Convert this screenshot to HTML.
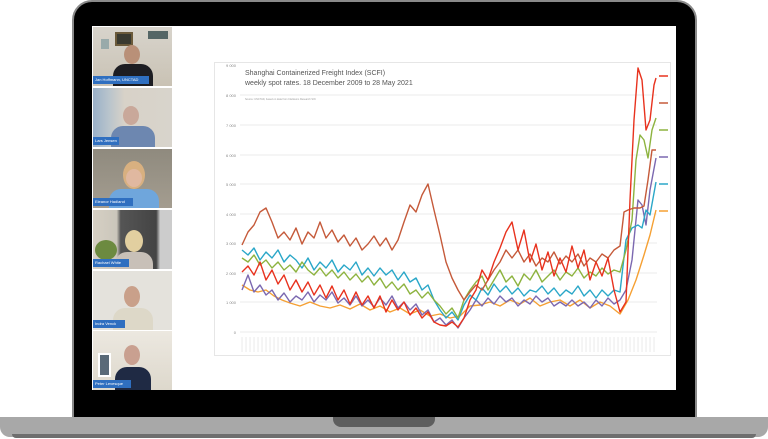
<!DOCTYPE html>
<html><head><style>
*{margin:0;padding:0;box-sizing:border-box}
body{width:768px;height:439px;background:#fff;position:relative;overflow:hidden;font-family:"Liberation Sans",sans-serif}
.frame{position:absolute;left:72px;top:0;width:625px;height:420px;background:#000;border:2px solid #8a8a8a;border-radius:20px 20px 0 0}
.screen{position:absolute;left:92px;top:26px;width:584px;height:364px;background:#fff}
.base{position:absolute;left:0;top:417px;width:768px;height:20px;background:#a8a8a8;border-radius:0 0 10px 10px}
.base2{position:absolute;left:12px;top:434px;width:744px;height:4px;background:#6e6e6e;border-radius:0 0 6px 6px}
.notch{position:absolute;left:333px;top:417px;width:102px;height:10px;background:#5e5e5e;border-radius:0 0 8px 8px}
.tile{position:absolute;left:93px;width:79px;height:59px;overflow:hidden}
.lab{position:absolute;left:0;bottom:2px;height:8px;background:#2f6fc0;color:#fff;font-size:4px;line-height:8px;padding:0 2px;white-space:nowrap;overflow:hidden}
.head{position:absolute;border-radius:50%}
.body{position:absolute;border-radius:12px 12px 0 0}
</style></head><body>
<div class="frame"></div>
<div class="screen"></div>
<div class="base"></div><div class="base2"></div><div class="notch"></div>

<div class="tile" style="top:27px;background:linear-gradient(#d8d4cc,#c9c2b4)">
<div style="position:absolute;left:22px;top:5px;width:18px;height:14px;background:#3a3a30;border:2px solid #6b5a3a"></div>
<div style="position:absolute;left:8px;top:12px;width:8px;height:10px;background:#9aa;"></div>
<div style="position:absolute;left:55px;top:4px;width:20px;height:8px;background:#566"></div>
<div class="head" style="left:31px;top:18px;width:16px;height:19px;background:#b99078"></div>
<div class="body" style="left:20px;top:37px;width:40px;height:22px;background:#1d1d22"></div>
<div class="lab" style="width:56px">Jan Hoffmann, UNCTAD</div></div>

<div class="tile" style="top:88px;background:linear-gradient(90deg,#9ab0c8 0,#b8c4cc 20%,#d8d2c8 40%,#d8d4cc)">
<div class="head" style="left:30px;top:18px;width:16px;height:19px;background:#c9a89a"></div>
<div class="body" style="left:18px;top:38px;width:44px;height:21px;background:#6d87b0"></div>
<div class="lab" style="width:26px">Lars Jensen</div></div>

<div class="tile" style="top:149px;background:linear-gradient(#8f8a7e,#a49d90)">
<div class="head" style="left:30px;top:12px;width:22px;height:28px;background:#d8b080"></div>
<div class="head" style="left:33px;top:20px;width:16px;height:18px;background:#e0b8a0"></div>
<div class="body" style="left:16px;top:40px;width:50px;height:19px;background:#6fa6dc"></div>
<div class="lab" style="width:40px">Eleanor Hadland</div></div>

<div class="tile" style="top:210px;background:linear-gradient(90deg,#d6d0c4 0,#cbc6bb 30%,#555 35%,#444 80%,#ccc 85%)">
<div style="position:absolute;left:2px;top:30px;width:22px;height:20px;background:#6c8a40;border-radius:50%"></div>
<div class="head" style="left:32px;top:20px;width:18px;height:22px;background:#e2cfa0"></div>
<div class="body" style="left:22px;top:42px;width:38px;height:17px;background:#c8c0b8"></div>
<div class="lab" style="width:36px">Rachael White</div></div>

<div class="tile" style="top:271px;background:#e4e2dc">
<div class="head" style="left:31px;top:15px;width:16px;height:21px;background:#c9a08a"></div>
<div class="body" style="left:20px;top:37px;width:40px;height:22px;background:#ddd8c8"></div>
<div class="lab" style="width:32px">Indra Venck</div></div>

<div class="tile" style="top:331px;background:linear-gradient(#ece8e0,#ddd8cc)">
<div style="position:absolute;left:5px;top:22px;width:13px;height:24px;background:#5a6a78;border:2px solid #fff"></div>
<div class="head" style="left:31px;top:14px;width:16px;height:20px;background:#c9a090"></div>
<div class="body" style="left:22px;top:36px;width:36px;height:23px;background:#1f2a44"></div>
<div class="lab" style="width:38px">Peter Levesque</div></div>

<svg style="position:absolute;left:0;top:0" width="768" height="439">
<rect x="214.5" y="62.5" width="456" height="293" fill="#fff" stroke="#e6e6e6"/>
<g stroke="#e4e4e4" stroke-width="0.8">
<line x1="240" y1="95" x2="657" y2="95"/><line x1="240" y1="125" x2="657" y2="125"/><line x1="240" y1="155" x2="657" y2="155"/><line x1="240" y1="184" x2="657" y2="184"/><line x1="240" y1="214" x2="657" y2="214"/><line x1="240" y1="243" x2="657" y2="243"/><line x1="240" y1="273" x2="657" y2="273"/><line x1="240" y1="302" x2="657" y2="302"/><line x1="240" y1="332" x2="657" y2="332"/>
</g>
<g font-size="4" fill="#888" text-anchor="end">
<text x="236" y="67">9 000</text><text x="236" y="97">8 000</text><text x="236" y="127">7 000</text><text x="236" y="157">6 000</text><text x="236" y="186">5 000</text><text x="236" y="216">4 000</text><text x="236" y="245">3 000</text><text x="236" y="275">2 000</text><text x="236" y="304">1 000</text><text x="236" y="334">0</text>
</g>
<text x="245" y="75" font-size="7" fill="#555">Shanghai Containerized Freight Index (SCFI)</text>
<text x="245" y="85" font-size="7" fill="#555">weekly spot rates. 18 December 2009 to 28 May 2021</text>
<text x="245" y="100" font-size="2.5" fill="#999">Source: UNCTAD, based on data from Clarksons Research SIN</text>
<g stroke="#ccc" stroke-width="0.4"><path d="M242 337V352M246 337V352M250 337V352M254 337V352M258 337V352M262 337V352M266 337V352M270 337V352M274 337V352M278 337V352M282 337V352M286 337V352M290 337V352M294 337V352M298 337V352M302 337V352M306 337V352M310 337V352M314 337V352M318 337V352M322 337V352M326 337V352M330 337V352M334 337V352M338 337V352M342 337V352M346 337V352M350 337V352M354 337V352M358 337V352M362 337V352M366 337V352M370 337V352M374 337V352M378 337V352M382 337V352M386 337V352M390 337V352M394 337V352M398 337V352M402 337V352M406 337V352M410 337V352M414 337V352M418 337V352M422 337V352M426 337V352M430 337V352M434 337V352M438 337V352M442 337V352M446 337V352M450 337V352M454 337V352M458 337V352M462 337V352M466 337V352M470 337V352M474 337V352M478 337V352M482 337V352M486 337V352M490 337V352M494 337V352M498 337V352M502 337V352M506 337V352M510 337V352M514 337V352M518 337V352M522 337V352M526 337V352M530 337V352M534 337V352M538 337V352M542 337V352M546 337V352M550 337V352M554 337V352M558 337V352M562 337V352M566 337V352M570 337V352M574 337V352M578 337V352M582 337V352M586 337V352M590 337V352M594 337V352M598 337V352M602 337V352M606 337V352M610 337V352M614 337V352M618 337V352M622 337V352M626 337V352M630 337V352M634 337V352M638 337V352M642 337V352M646 337V352M650 337V352M654 337V352"/></g>
<g fill="none" stroke-width="1.4" stroke-linejoin="round">
<polyline stroke="#f5a033" points="242,285 250,290 258,292 266,290 274,296 282,300 290,303 300,306 310,302 320,306 330,308 340,305 350,309 360,304 370,310 380,306 390,312 400,308 410,314 420,310 430,316 440,314 450,318 460,316 470,306 480,305 490,302 500,306 510,300 520,304 530,298 540,306 550,302 560,300 570,306 580,300 590,308 600,302 610,306 620,314 628,300 636,280 644,255 650,235 656,210"/>
<polyline stroke="#7b68b0" points="242,290 248,275 254,292 260,285 266,295 272,290 278,300 284,293 290,302 296,296 302,300 308,292 314,302 320,295 326,300 332,292 338,303 344,298 350,305 356,296 362,306 368,300 374,307 380,298 386,305 392,296 398,308 404,302 410,310 416,304 422,315 428,310 434,322 440,318 446,325 452,320 458,328 464,318 470,310 476,300 482,306 488,298 494,304 500,296 506,302 512,298 518,306 524,300 530,304 536,296 542,302 548,298 554,306 560,302 566,306 572,300 578,306 584,302 590,308 596,300 602,306 608,298 614,304 620,300 626,290 632,260 638,200 642,205 646,225 650,190 656,158"/>
<polyline stroke="#2aa7c8" points="242,250 248,255 254,248 260,260 266,252 272,258 278,250 284,262 290,255 296,260 302,268 308,258 314,270 320,262 326,268 332,260 338,272 344,265 350,270 356,262 362,275 368,268 374,276 380,268 386,275 392,270 398,280 404,272 410,282 416,278 422,290 428,285 434,300 440,310 446,318 452,312 458,320 464,305 470,295 476,300 482,288 488,295 494,284 500,292 506,286 512,294 518,288 524,296 530,290 536,292 542,286 548,294 554,288 560,296 566,290 572,294 578,286 584,296 590,290 596,298 602,290 608,296 614,290 620,292 626,240 632,228 638,225 642,228 646,210 650,215 656,182"/>
<polyline stroke="#8db33f" points="242,258 248,262 254,255 260,265 266,260 272,268 278,262 284,270 290,265 296,272 302,262 308,270 314,275 320,268 326,276 332,270 338,278 344,272 350,280 356,274 362,282 368,276 374,285 380,278 386,288 392,282 398,290 404,284 410,294 416,290 422,298 428,292 434,300 440,306 446,314 452,308 458,318 464,300 470,290 476,282 482,276 488,290 494,280 500,270 506,282 512,276 518,286 524,274 530,280 536,270 542,282 548,276 554,270 560,280 566,272 572,276 578,268 584,278 590,272 596,276 602,268 608,274 614,270 620,272 626,250 632,220 636,160 640,135 644,140 648,158 652,130 656,118"/>
<polyline stroke="#c55a3a" points="242,245 248,232 254,225 260,212 266,208 272,222 278,238 284,232 290,240 296,228 302,244 308,232 314,238 320,222 326,238 332,230 338,242 344,235 350,246 356,238 362,250 368,244 374,236 380,246 386,238 392,250 398,240 404,222 410,205 416,212 422,195 428,184 434,210 440,235 446,262 452,278 458,290 464,300 470,292 476,285 482,290 488,280 494,270 500,262 506,250 512,258 518,250 524,262 530,254 536,266 542,258 548,262 554,252 560,264 566,256 572,262 578,254 584,266 590,258 596,262 602,254 608,258 614,250 620,246 624,212 628,210 634,208 640,208 644,206 648,180 652,150 656,150"/>
<polyline stroke="#e8321e" points="242,272 248,266 254,275 260,262 266,280 272,270 278,284 284,275 290,290 296,280 302,292 308,282 314,295 320,285 326,298 332,286 338,300 344,290 350,304 356,292 362,305 368,296 374,308 380,296 386,312 392,300 398,310 404,302 410,315 416,308 422,318 428,312 434,322 440,325 446,326 452,322 458,327 464,318 470,300 476,290 482,270 488,280 494,262 500,248 506,232 512,222 518,250 524,230 530,262 536,244 542,270 548,252 554,276 560,258 566,272 572,246 578,268 584,250 590,280 596,262 602,276 608,258 614,290 620,312 626,302 630,200 634,120 638,68 642,80 646,130 650,120 654,85 656,78"/>
</g>
<g stroke-width="1.5"><line x1="659" y1="76" x2="668" y2="76" stroke="#e8321e"/><line x1="659" y1="103" x2="668" y2="103" stroke="#c55a3a"/><line x1="659" y1="130" x2="668" y2="130" stroke="#8db33f"/><line x1="659" y1="157" x2="668" y2="157" stroke="#7b68b0"/><line x1="659" y1="184" x2="668" y2="184" stroke="#2aa7c8"/><line x1="659" y1="211" x2="668" y2="211" stroke="#f5a033"/></g>
</svg>
</body></html>
